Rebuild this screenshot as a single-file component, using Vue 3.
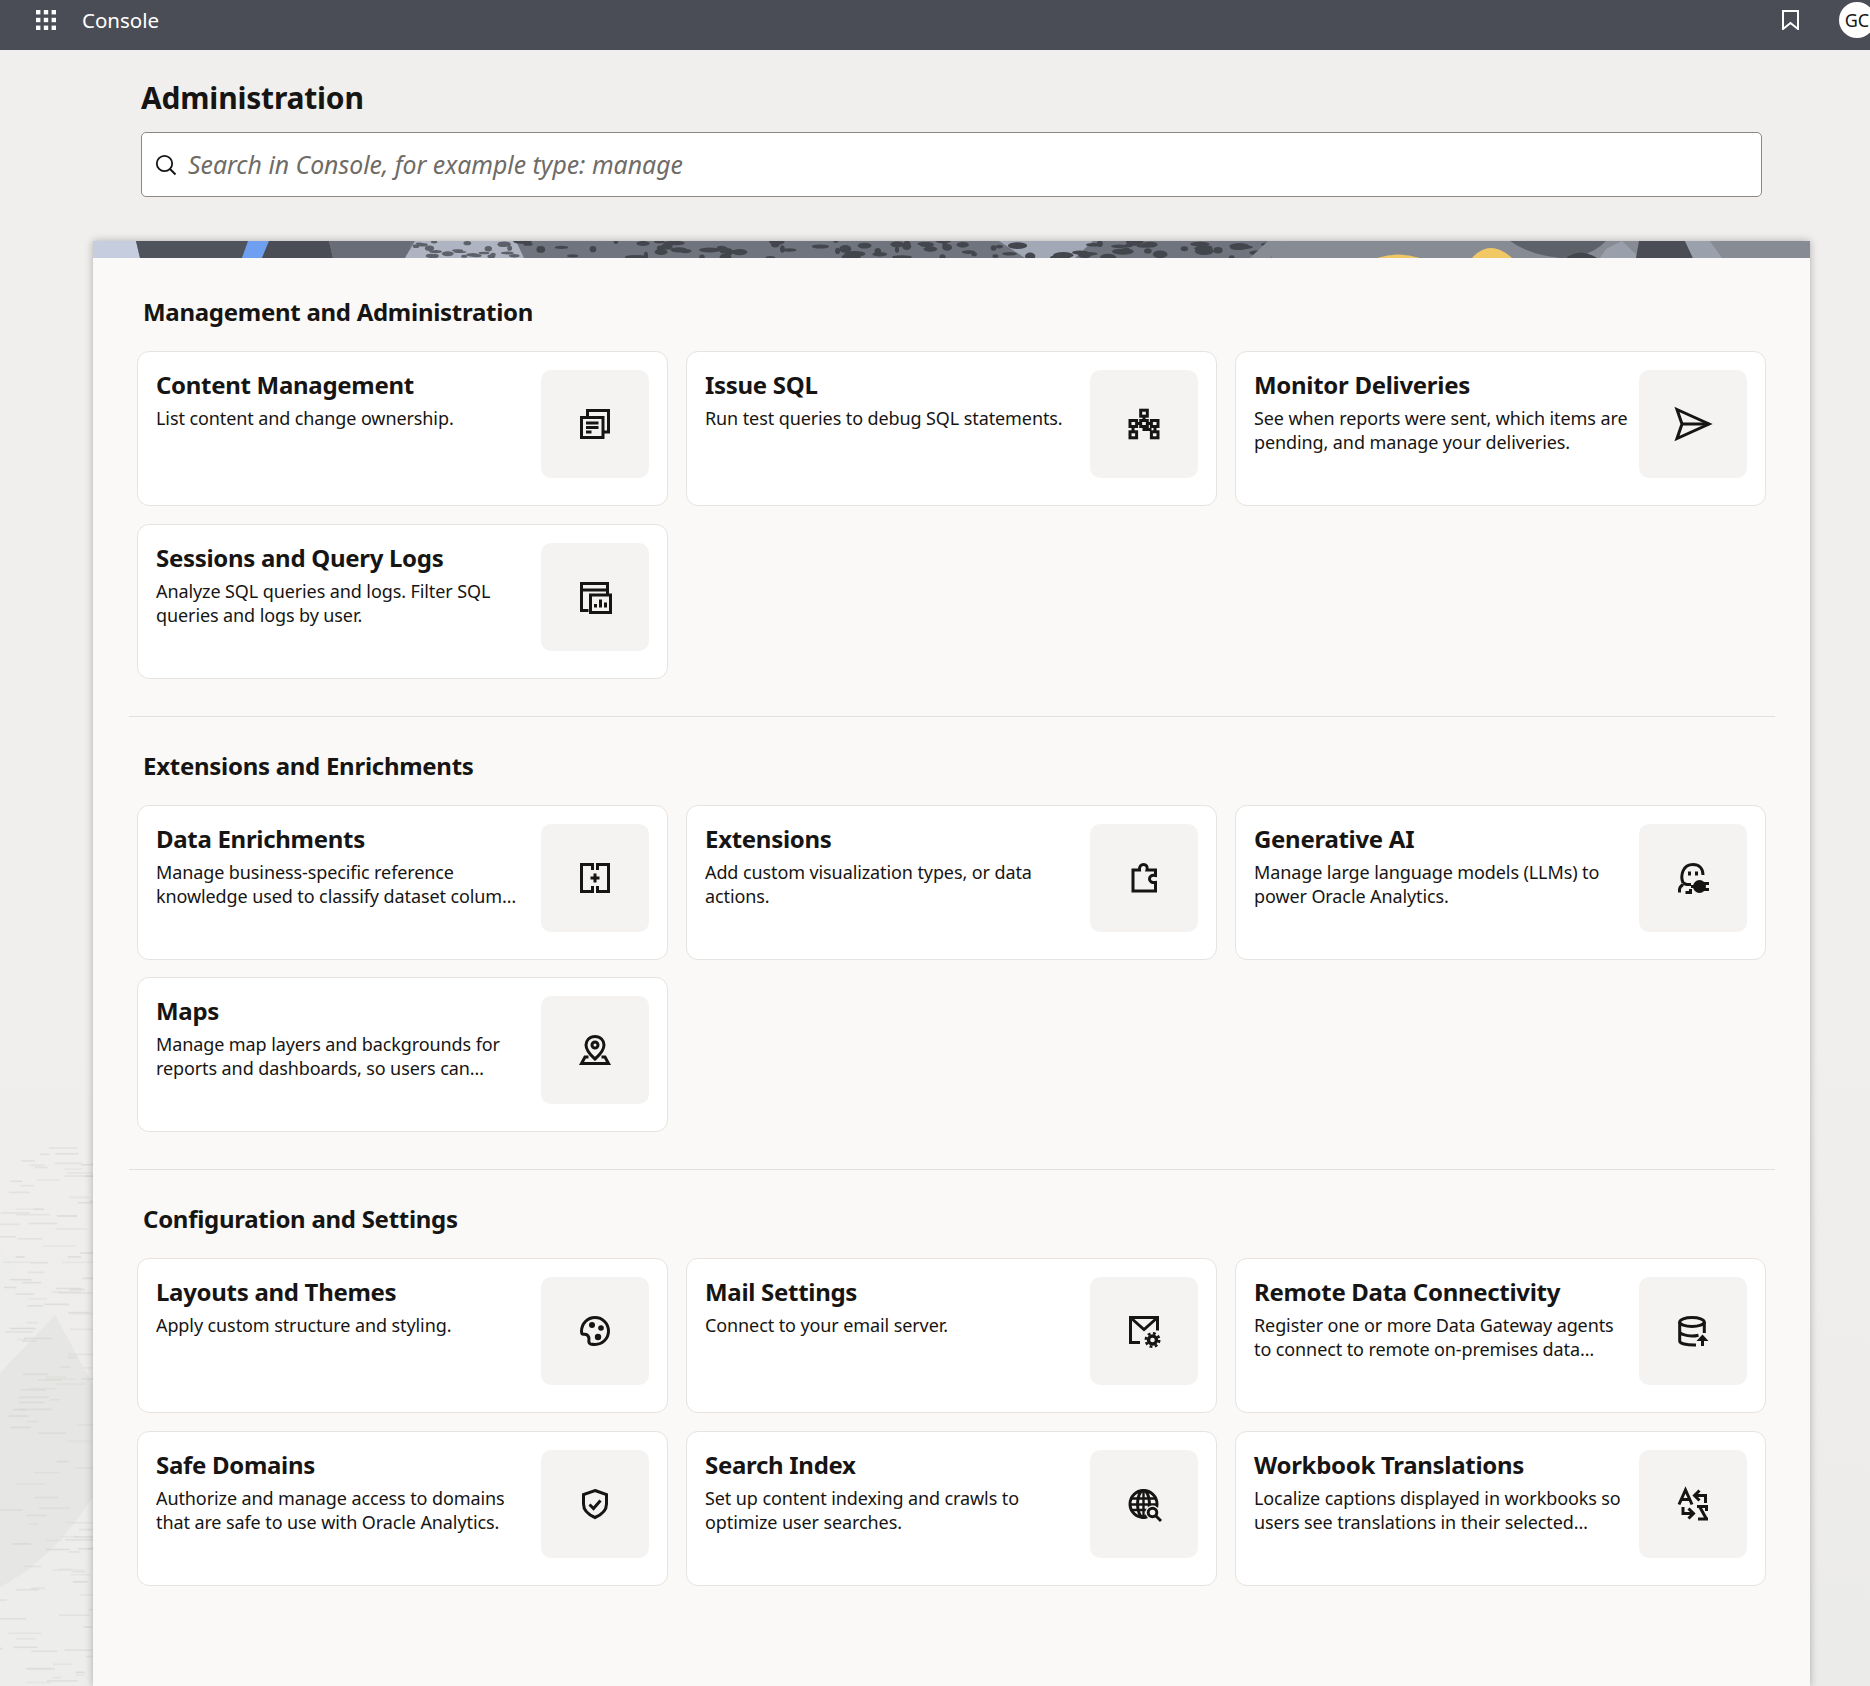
<script setup>
function rng(seed) {
  let s = seed
  return () => {
    s = (s * 16807) % 2147483647
    return (s - 1) / 2147483646
  }
}

const r1 = rng(4711)
const dashes = Array.from({ length: 130 }, () => ({
  x: r1() * 96 - 6,
  y: 1145 + r1() * 540,
  w: 8 + r1() * 26,
  o: 0.3 + r1() * 0.4
}))

const r2 = rng(99)
const darkSpots = Array.from({ length: 92 }, () => ({
  x: 522 + r2() * 750,
  y: r2() * 17,
  rx: 2 + r2() * 9,
  ry: 1.5 + r2() * 2.4
}))
const lightSpots = Array.from({ length: 24 }, () => ({
  x: 415 + r2() * 100,
  y: r2() * 17,
  rx: 2 + r2() * 5,
  ry: 1 + r2() * 1.8
}))

const icons = {
  docs: '<path d="M1.5 8.5H23V28.5H1.5Z"/><path d="M7.5 8V1.5H28.5V23H23.5"/><path d="M6 14H18.5M6 18.5H18.5M6 23H11.5"/>',
  network: '<path d="M15 7V12M8 14.5H11.5M19 14.5H22M4 18V23M26 18V23M15 18V20.5H22.5"/><rect x="11.7" y="1.2" width="6.6" height="6"/><rect x="1" y="11.5" width="6.6" height="6"/><rect x="11.7" y="11.5" width="6.6" height="6"/><rect x="22.4" y="11.5" width="6.6" height="6"/><rect x="1" y="22.8" width="6.6" height="6"/><rect x="22.4" y="22.8" width="6.6" height="6"/>',
  send: '<path d="M-1 0.5L31 15L-1 29.5L4 15Z"/><path d="M4 15H31"/>',
  sessions: '<path d="M8.5 28.5H1.5V1.5H27.5V12.5"/><path d="M1.5 8H27.5"/><rect x="10.5" y="13" width="20" height="17.5"/><path d="M15.5 25.5V22M20.5 25.5V17.5M25.5 25.5V20.5"/>',
  enrich: '<path d="M12.5 1.5H1.5V28.5H12.5M17.5 1.5H28.5V28.5H17.5"/><path d="M12.5 0V7M17.5 0V7M12.5 23V30M17.5 23V30"/><path d="M15 10.5V19.5M10.5 15H19.5"/>',
  puzzle: '<path d="M4 28V7H10.5C10 3 12.5 1.5 14.5 1.5C17 1.5 19 3.5 18 7H26.5V12.5C22 11.5 20.5 14 20.5 16C20.5 18.5 23 20 26.5 19.5V28Z"/>',
  genai: '<path d="M5 20C2 12 5 1.5 15 1.5C21 1.5 25 5.5 25 12"/><path d="M5 20L8.5 21.5H13"/><path d="M1.5 29.5V26.5C1.5 24.5 3 23 5 21.5M7.5 29.5H12.5V26"/><path d="M11.5 8.5V12.5M18.5 8.5V12.5"/><circle cx="21.5" cy="23.5" r="5" fill="currentColor"/><path d="M13 23.5H17M26 20.5H31M26 26.5H31"/>',
  pin: '<path d="M15 1.5C9.5 1.5 6 5.5 6 10C6 15 11 20.5 15 24C19 20.5 24 15 24 10C24 5.5 20.5 1.5 15 1.5Z"/><circle cx="15" cy="10" r="3"/><path d="M8.5 22H5L1.5 28.5H28.5L25 22H21.5"/>',
  palette: '<path d="M10.5 28C7.5 27 9.5 24 8.8 21.5C8 18.8 5.5 18 3.5 18.3C2 18.3 1.5 17 1.5 15.3C1.5 7.5 7.5 1.5 15 1.5C22.5 1.5 28.5 7.5 28.5 15C28.5 22.5 22.5 28.5 15 28.5C13.3 28.5 11.8 28.3 10.5 28Z"/><circle cx="12" cy="9" r="3" fill="currentColor" stroke="none"/><circle cx="21" cy="12" r="2.8" fill="currentColor" stroke="none"/><circle cx="18" cy="21" r="3.2" fill="currentColor" stroke="none"/>',
  shield: '<path d="M15 1.5L26.5 5.5V15C26.5 21 22 25.5 15 28.5C8 25.5 3.5 21 3.5 15V5.5Z"/><path d="M9.5 15.5L13.5 19.5L20.5 11.5"/>',
  mail: '<path d="M11 26.5H1.5V1.5H28.5V14.5"/><path d="M1.5 1.5L15 13.5L28.5 1.5"/><circle cx="23.5" cy="24" r="4" stroke-width="3.4"/><circle cx="23.5" cy="24" r="6.7" stroke-width="2.6" stroke-dasharray="2.8 2.5"/>',
  globe: '<circle cx="14.5" cy="15" r="13.5"/><ellipse cx="14.5" cy="15" rx="6" ry="13.5"/><path d="M14.5 1.5V28.5M2 9.5H27M1 15.5H28M2.5 21H20" stroke-width="2.4"/><circle cx="23.5" cy="23.5" r="7" fill="#f4f3f1" stroke="none"/><circle cx="23.5" cy="23.5" r="4.3"/><path d="M26.5 26.5L32 32"/>',
  db: '<ellipse cx="14" cy="6" rx="12.3" ry="4.5"/><path d="M1.7 6V25C1.7 27.5 8 29.2 18 29M1.7 15.5C1.7 18 8 20 14 20C16.5 20 18.5 19.7 20.5 19.2M26.3 6V17"/><path d="M24.5 30V23"/><path d="M18.5 25L24.5 18.5L30.5 25Z" fill="currentColor" stroke="none"/>',
  translate: '<path d="M1 15.5L7.5 1L14 15.5M3.8 10.5H11.2"/><path d="M21.5 1.5L16.5 6.5L21.5 11.5M17 6.5H27.5V14"/><path d="M5 18V24.5H15M10.5 19.5L15.5 24.5L10.5 29.5"/><path d="M19 17.5H30M21.5 17.5L28.5 30M28.5 17.5V22M20 30H30"/>'
}

const sections = [
  {
    title: 'Management and Administration',
    cards: [
      { title: 'Content Management', desc: 'List content and change ownership.', icon: 'docs' },
      { title: 'Issue SQL', desc: 'Run test queries to debug SQL statements.', icon: 'network' },
      { title: 'Monitor Deliveries', desc: 'See when reports were sent, which items are pending, and manage your deliveries.', icon: 'send' },
      { title: 'Sessions and Query Logs', desc: 'Analyze SQL queries and logs. Filter SQL queries and logs by user.', icon: 'sessions' }
    ]
  },
  {
    title: 'Extensions and Enrichments',
    cards: [
      { title: 'Data Enrichments', desc: 'Manage business-specific reference knowledge used to classify dataset colum…', icon: 'enrich' },
      { title: 'Extensions', desc: 'Add custom visualization types, or data actions.', icon: 'puzzle' },
      { title: 'Generative AI', desc: 'Manage large language models (LLMs) to power Oracle Analytics.', icon: 'genai' },
      { title: 'Maps', desc: 'Manage map layers and backgrounds for reports and dashboards, so users can…', icon: 'pin' }
    ]
  },
  {
    title: 'Configuration and Settings',
    cards: [
      { title: 'Layouts and Themes', desc: 'Apply custom structure and styling.', icon: 'palette' },
      { title: 'Mail Settings', desc: 'Connect to your email server.', icon: 'mail' },
      { title: 'Remote Data Connectivity', desc: 'Register one or more Data Gateway agents to connect to remote on-premises data…', icon: 'db' },
      { title: 'Safe Domains', desc: 'Authorize and manage access to domains that are safe to use with Oracle Analytics.', icon: 'shield' },
      { title: 'Search Index', desc: 'Set up content indexing and crawls to optimize user searches.', icon: 'globe' },
      { title: 'Workbook Translations', desc: 'Localize captions displayed in workbooks so users see translations in their selected…', icon: 'translate' }
    ]
  }
]
</script>

<template>
  <div class="page">
    <svg class="backdrop" width="93" height="1686" viewBox="0 0 93 1686" aria-hidden="true">
      <path d="M0 1246L93 1385V1686H0Z" fill="#ededeb" />
      <path d="M0 1373L55 1315L93 1385V1497Q50 1562 0 1587Z" fill="#e6e6e4" />
      <rect
        v-for="(d, i) in dashes"
        :key="i"
        :x="d.x"
        :y="d.y"
        :width="d.w"
        height="1.6"
        fill="#d4d4d2"
        :opacity="d.o"
      />
    </svg>

    <header class="topbar">
      <svg class="apps" width="20" height="20" viewBox="0 0 20 20" aria-hidden="true">
        <g fill="#fff">
          <rect x="0" y="0" width="4.4" height="4.4" />
          <rect x="7.8" y="0" width="4.4" height="4.4" />
          <rect x="15.6" y="0" width="4.4" height="4.4" />
          <rect x="0" y="7.8" width="4.4" height="4.4" />
          <rect x="7.8" y="7.8" width="4.4" height="4.4" />
          <rect x="15.6" y="7.8" width="4.4" height="4.4" />
          <rect x="0" y="15.6" width="4.4" height="4.4" />
          <rect x="7.8" y="15.6" width="4.4" height="4.4" />
          <rect x="15.6" y="15.6" width="4.4" height="4.4" />
        </g>
      </svg>
      <span class="product">Console</span>
      <svg class="bookmark" width="17" height="20" viewBox="0 0 17 20" aria-hidden="true">
        <path d="M1 1H16V19L8.5 13L1 19Z" fill="none" stroke="#fff" stroke-width="2" />
      </svg>
      <span class="avatar">GC</span>
    </header>

    <div class="intro">
      <h1 class="page-title">Administration</h1>
      <div class="search">
        <svg width="22" height="22" viewBox="0 0 22 22" aria-hidden="true">
          <circle cx="9.5" cy="9.5" r="7.7" fill="none" stroke="#161513" stroke-width="1.8" />
          <path d="M15 15L20.5 20.5" stroke="#161513" stroke-width="2" fill="none" />
        </svg>
        <span class="placeholder">Search in Console, for example type: manage</span>
      </div>
    </div>

    <main class="panel">
      <svg class="banner" width="1717" height="17" viewBox="93 0 1717 17" preserveAspectRatio="none" aria-hidden="true">
        <rect x="93" y="0" width="1717" height="17" fill="#868b94" />
        <path d="M93 0H136L140 17H93Z" fill="#c5cddf" />
        <path d="M136 0H250L242 17H140Z" fill="#4f545c" />
        <path d="M248 0H269L262 17H242Z" fill="#6f9ff0" />
        <path d="M269 0H329L333 17H262Z" fill="#4a4d55" />
        <path d="M329 0H415L405 17H333Z" fill="#686d77" />
        <rect x="410" y="0" width="862" height="17" fill="#6f747e" />
        <path d="M415 0H516L524 17H405Z" fill="#aeb4c2" />
        <path d="M999 0H1093L1075 17H1025Z" fill="#a2a8b5" />
        <ellipse v-for="(s, i) in lightSpots" :key="'l' + i" :cx="s.x" :cy="s.y" :rx="s.rx" :ry="s.ry" fill="#5c6069" />
        <ellipse v-for="(s, i) in darkSpots" :key="'d' + i" :cx="s.x" :cy="s.y" :rx="s.rx" :ry="s.ry" fill="#43464d" />
        <path d="M1268 0H1290L1270 17H1250Z" fill="#868b94" />
        <path d="M1377 17Q1398 10 1420 17Z" fill="#f2c865" />
        <path d="M1472 17Q1490 -3 1512 17Z" fill="#f2c865" />
        <path d="M1510 0H1606Q1590 17 1560 17Q1530 14 1510 0Z" fill="#5d616a" />
        <path d="M1566 17Q1580 6 1597 17Z" fill="#43464d" />
        <path d="M1606 8L1622 0L1640 17H1600Z" fill="#9aa0ab" />
        <path d="M1639 0H1685L1693 17H1636Z" fill="#4a4d55" />
        <path d="M1685 0H1710L1722 17H1693Z" fill="#9aa1ad" />
      </svg>

      <section v-for="s in sections" :key="s.title" class="section">
        <h2 class="section-title">{{ s.title }}</h2>
        <div class="grid">
          <article v-for="c in s.cards" :key="c.title" class="card">
            <div class="text">
              <h3 class="card-title">{{ c.title }}</h3>
              <p class="card-desc">{{ c.desc }}</p>
            </div>
            <div class="tile">
              <svg class="icon" viewBox="0 0 30 30" aria-hidden="true" v-html="icons[c.icon]"></svg>
            </div>
          </article>
        </div>
      </section>
    </main>
  </div>
</template>

<style>
html, body {
  margin: 0;
  background: #f1efed;
}
</style>

<style scoped>
.page {
  position: relative;
  width: 1870px;
  height: 1686px;
  overflow: hidden;
  display: flex;
  flex-direction: column;
  background: linear-gradient(#f1efed 60%, #ebebea);
  font-family: "Noto Sans", "Liberation Sans", sans-serif;
  color: #161513;
}
.backdrop {
  position: absolute;
  left: 0;
  top: 0;
}
.topbar {
  position: relative;
  flex: none;
  height: 40px;
  padding-bottom: 10px;
  background: #4a4d55;
  display: flex;
  align-items: center;
  color: #fff;
}
.apps {
  margin-left: 36px;
}
.product {
  margin-left: 26px;
  font-size: 20.5px;
}
.bookmark {
  margin-left: auto;
  margin-right: 40px;
}
.avatar {
  flex: none;
  width: 36px;
  height: 36px;
  margin-right: -5px;
  border-radius: 50%;
  background: #fff;
  color: #161513;
  font-size: 18px;
  line-height: 36px;
  text-align: center;
}
.intro {
  position: relative;
  flex: none;
  padding: 28px 108px 44px 141px;
}
.page-title {
  margin: 0 0 15px;
  font-size: 30px;
  line-height: 39px;
  font-weight: 700;
  letter-spacing: -0.2px;
}
.search {
  height: 63px;
  display: flex;
  align-items: center;
  gap: 11px;
  padding-left: 13px;
  background: #fff;
  border: 1px solid #8c8985;
  border-radius: 5px;
}
.placeholder {
  font-size: 24.8px;
  line-height: 30px;
  margin-top: -1px;
  font-style: italic;
  color: #6f6b66;
}
.panel {
  position: relative;
  flex: 1;
  margin-left: 93px;
  width: 1717px;
  background: #faf9f7;
  box-shadow: 0 0 8px rgba(0, 0, 0, 0.28);
}
.banner {
  display: block;
}
.section {
  margin: 0 35px 0 36px;
  padding: 33px 0 37px;
  border-bottom: 1px solid #e2e0dd;
}
.section:first-of-type {
  padding-top: 38px;
}
.section:last-child {
  border-bottom: none;
}
.section-title {
  margin: 0 0 23px 14px;
  font-size: 24px;
  line-height: 32px;
  font-weight: 700;
  letter-spacing: -0.28px;
}
.grid {
  margin: 0 9px 0 8px;
  display: grid;
  grid-template-columns: repeat(3, 531px);
  column-gap: 18px;
  row-gap: 17.5px;
}
.card {
  box-sizing: border-box;
  height: 155px;
  display: flex;
  gap: 11px;
  padding: 18px;
  background: #fff;
  border: 1px solid #e6e3e0;
  border-radius: 12px;
}
.text {
  flex: 1;
  min-width: 0;
}
.card-title {
  margin: -1px 0 5px;
  font-size: 24px;
  line-height: 32px;
  font-weight: 700;
  letter-spacing: -0.3px;
}
.card-desc {
  margin: 0;
  font-size: 18px;
  line-height: 24px;
  letter-spacing: -0.1px;
  display: -webkit-box;
  -webkit-box-orient: vertical;
  -webkit-line-clamp: 2;
  overflow: hidden;
}
.tile {
  flex: none;
  width: 108px;
  height: 108px;
  display: flex;
  align-items: center;
  justify-content: center;
  background: #f4f3f1;
  border-radius: 10px;
}
.icon {
  width: 30px;
  height: 30px;
  overflow: visible;
  fill: none;
  stroke: currentColor;
  stroke-width: 3;
}
</style>
